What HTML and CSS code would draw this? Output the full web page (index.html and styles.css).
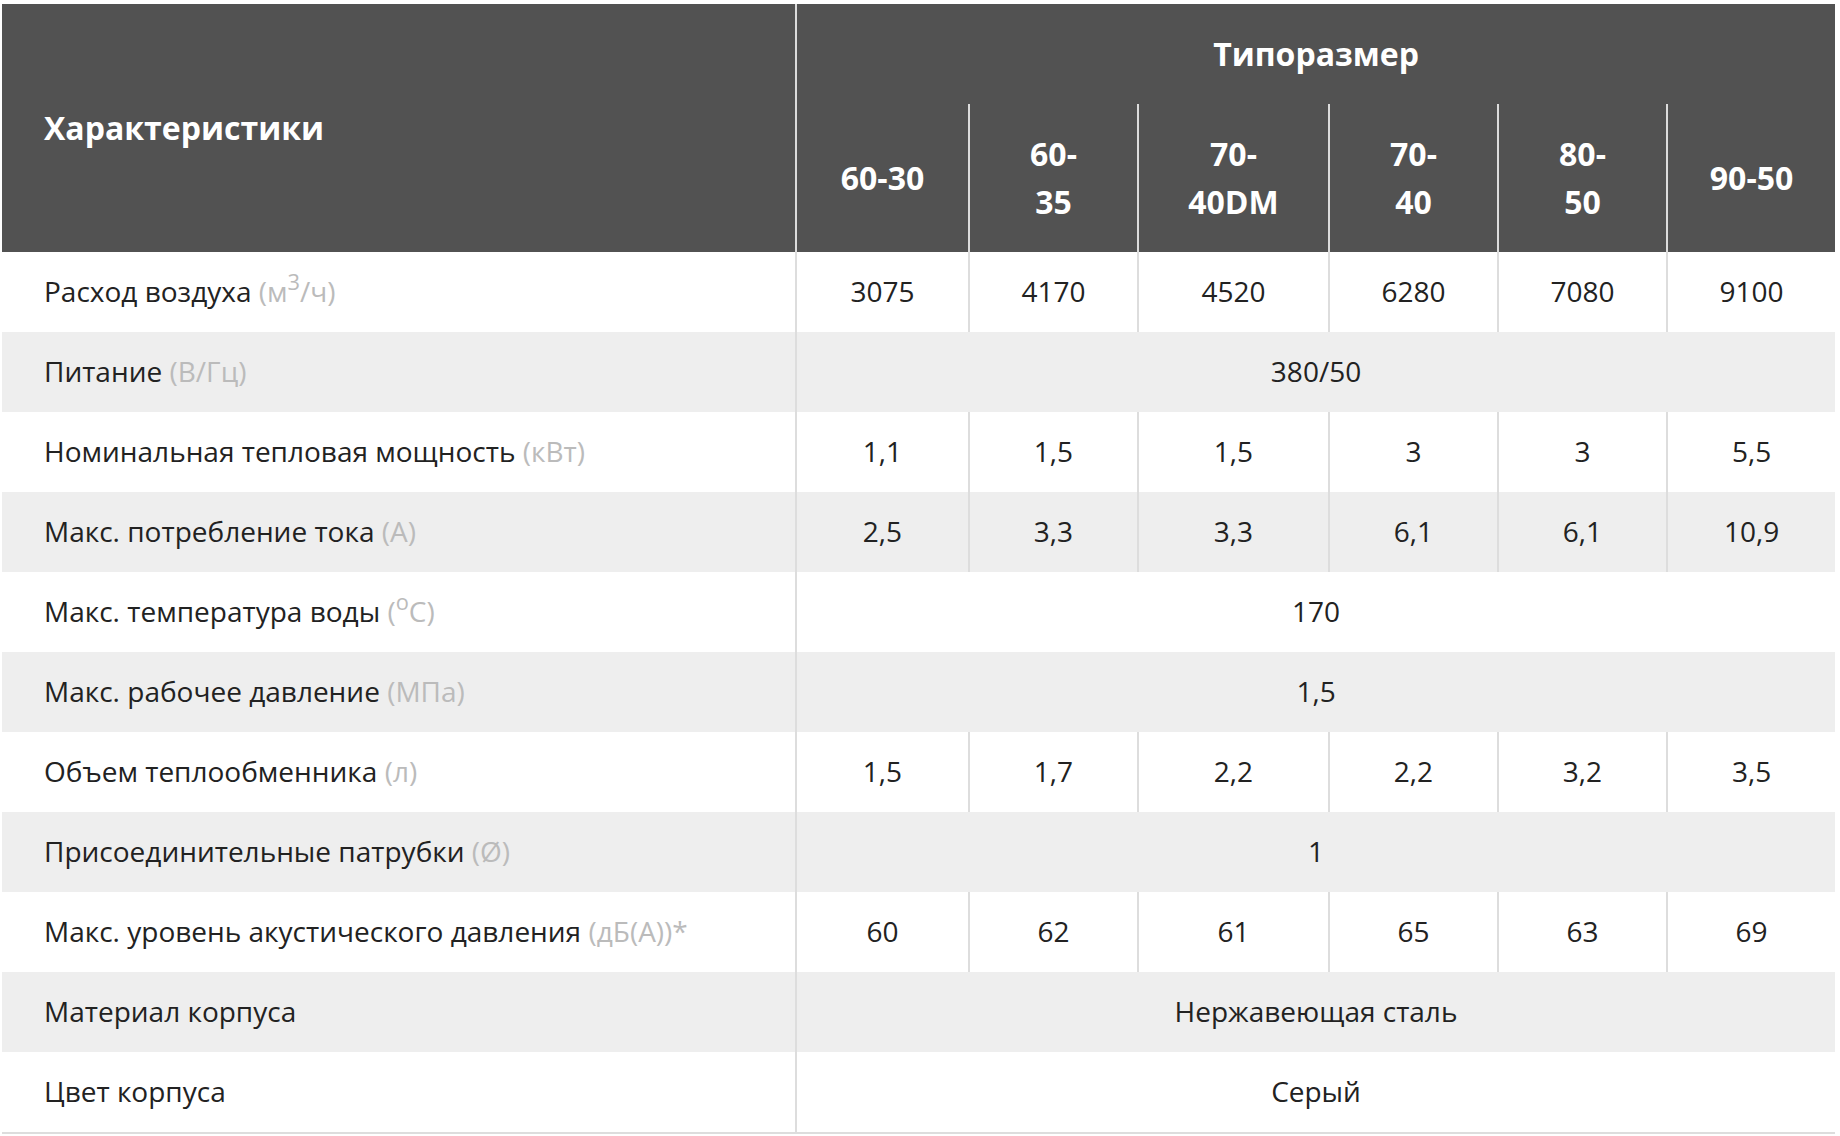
FILE: index.html
```html
<!DOCTYPE html>
<html lang="ru">
<head>
<meta charset="utf-8">
<title>Характеристики</title>
<link rel="stylesheet" href="styles.css">
</head>
<body>
<div class="wrap">
<table class="spec">
  <colgroup>
    <col class="c-name">
    <col class="c-1">
    <col class="c-2">
    <col class="c-3">
    <col class="c-4">
    <col class="c-5">
    <col class="c-6">
  </colgroup>
  <thead>
    <tr class="h1">
      <th rowspan="2" class="name-head">Характеристики</th>
      <th colspan="6" class="group-head">Типоразмер</th>
    </tr>
    <tr class="h2">
      <th class="first">60-30</th>
      <th>60-<br>35</th>
      <th>70-<br>40DM</th>
      <th>70-<br>40</th>
      <th>80-<br>50</th>
      <th>90-50</th>
    </tr>
  </thead>
  <tbody>
    <tr>
      <td class="name">Расход воздуха <span class="unit">(м<sup>3</sup>/ч)</span></td>
      <td>3075</td><td>4170</td><td>4520</td><td>6280</td><td>7080</td><td>9100</td>
    </tr>
    <tr>
      <td class="name">Питание <span class="unit">(В/Гц)</span></td>
      <td colspan="6">380/50</td>
    </tr>
    <tr>
      <td class="name">Номинальная тепловая мощность <span class="unit">(кВт)</span></td>
      <td>1,1</td><td>1,5</td><td>1,5</td><td>3</td><td>3</td><td>5,5</td>
    </tr>
    <tr>
      <td class="name">Макс. потребление тока <span class="unit">(А)</span></td>
      <td>2,5</td><td>3,3</td><td>3,3</td><td>6,1</td><td>6,1</td><td>10,9</td>
    </tr>
    <tr>
      <td class="name">Макс. температура воды <span class="unit">(<sup>o</sup>C)</span></td>
      <td colspan="6">170</td>
    </tr>
    <tr>
      <td class="name">Макс. рабочее давление <span class="unit">(МПа)</span></td>
      <td colspan="6">1,5</td>
    </tr>
    <tr>
      <td class="name">Объем теплообменника <span class="unit">(л)</span></td>
      <td>1,5</td><td>1,7</td><td>2,2</td><td>2,2</td><td>3,2</td><td>3,5</td>
    </tr>
    <tr>
      <td class="name">Присоединительные патрубки <span class="unit">(Ø)</span></td>
      <td colspan="6">1</td>
    </tr>
    <tr>
      <td class="name">Макс. уровень акустического давления <span class="unit">(дБ(А))*</span></td>
      <td>60</td><td>62</td><td>61</td><td>65</td><td>63</td><td>69</td>
    </tr>
    <tr>
      <td class="name">Материал корпуса</td>
      <td colspan="6">Нержавеющая сталь</td>
    </tr>
    <tr>
      <td class="name">Цвет корпуса</td>
      <td colspan="6">Серый</td>
    </tr>
  </tbody>
</table>
</div>
</body>
</html>
```

FILE: styles.css
```css
html, body {
  margin: 0;
  padding: 0;
  background: #ffffff;
}

body {
  font-family: "Open Sans", "Noto Sans", "DejaVu Sans", sans-serif;
  color: #222222;
}

.wrap {
  padding: 4px 0 0 2px;
}

.spec {
  width: 1833px;
  table-layout: fixed;
  border-collapse: collapse;
  border-bottom: 2px solid #dddddd;
}

.c-name { width: 794px; }
.c-1 { width: 173px; }
.c-2 { width: 169px; }
.c-3 { width: 191px; }
.c-4 { width: 169px; }
.c-5 { width: 169px; }
.c-6 { width: 168px; }

.spec thead th {
  background: #525252;
  color: #ffffff;
  font-weight: 700;
  font-size: 32px;
  line-height: 48px;
  text-align: center;
  vertical-align: middle;
  padding: 0;
}

.spec .h1 th {
  height: 100px;
}

.spec .h2 th {
  height: 148px;
  border-left: 2px solid #dcdcdc;
}

.spec .h2 th.first {
  border-left: none;
}

.spec thead th.name-head {
  text-align: left;
  padding-left: 42px;
  border-right: 2px solid #dcdcdc;
}

.spec thead th.group-head {
  line-height: 40px;
}

.spec tbody tr:nth-child(even) td {
  background: #eeeeee;
}

.spec tbody td {
  height: 78px;
  padding: 0 0 2px 0;
  font-size: 28px;
  line-height: 36px;
  text-align: center;
  vertical-align: middle;
  border-left: 2px solid #dddddd;
}

.spec tbody td.name {
  text-align: left;
  padding-left: 42px;
  border-left: none;
}

.unit {
  color: #bbbbbb;
}

.unit sup {
  font-size: 0.78em;
  line-height: 0;
  vertical-align: 0.55em;
}
```
